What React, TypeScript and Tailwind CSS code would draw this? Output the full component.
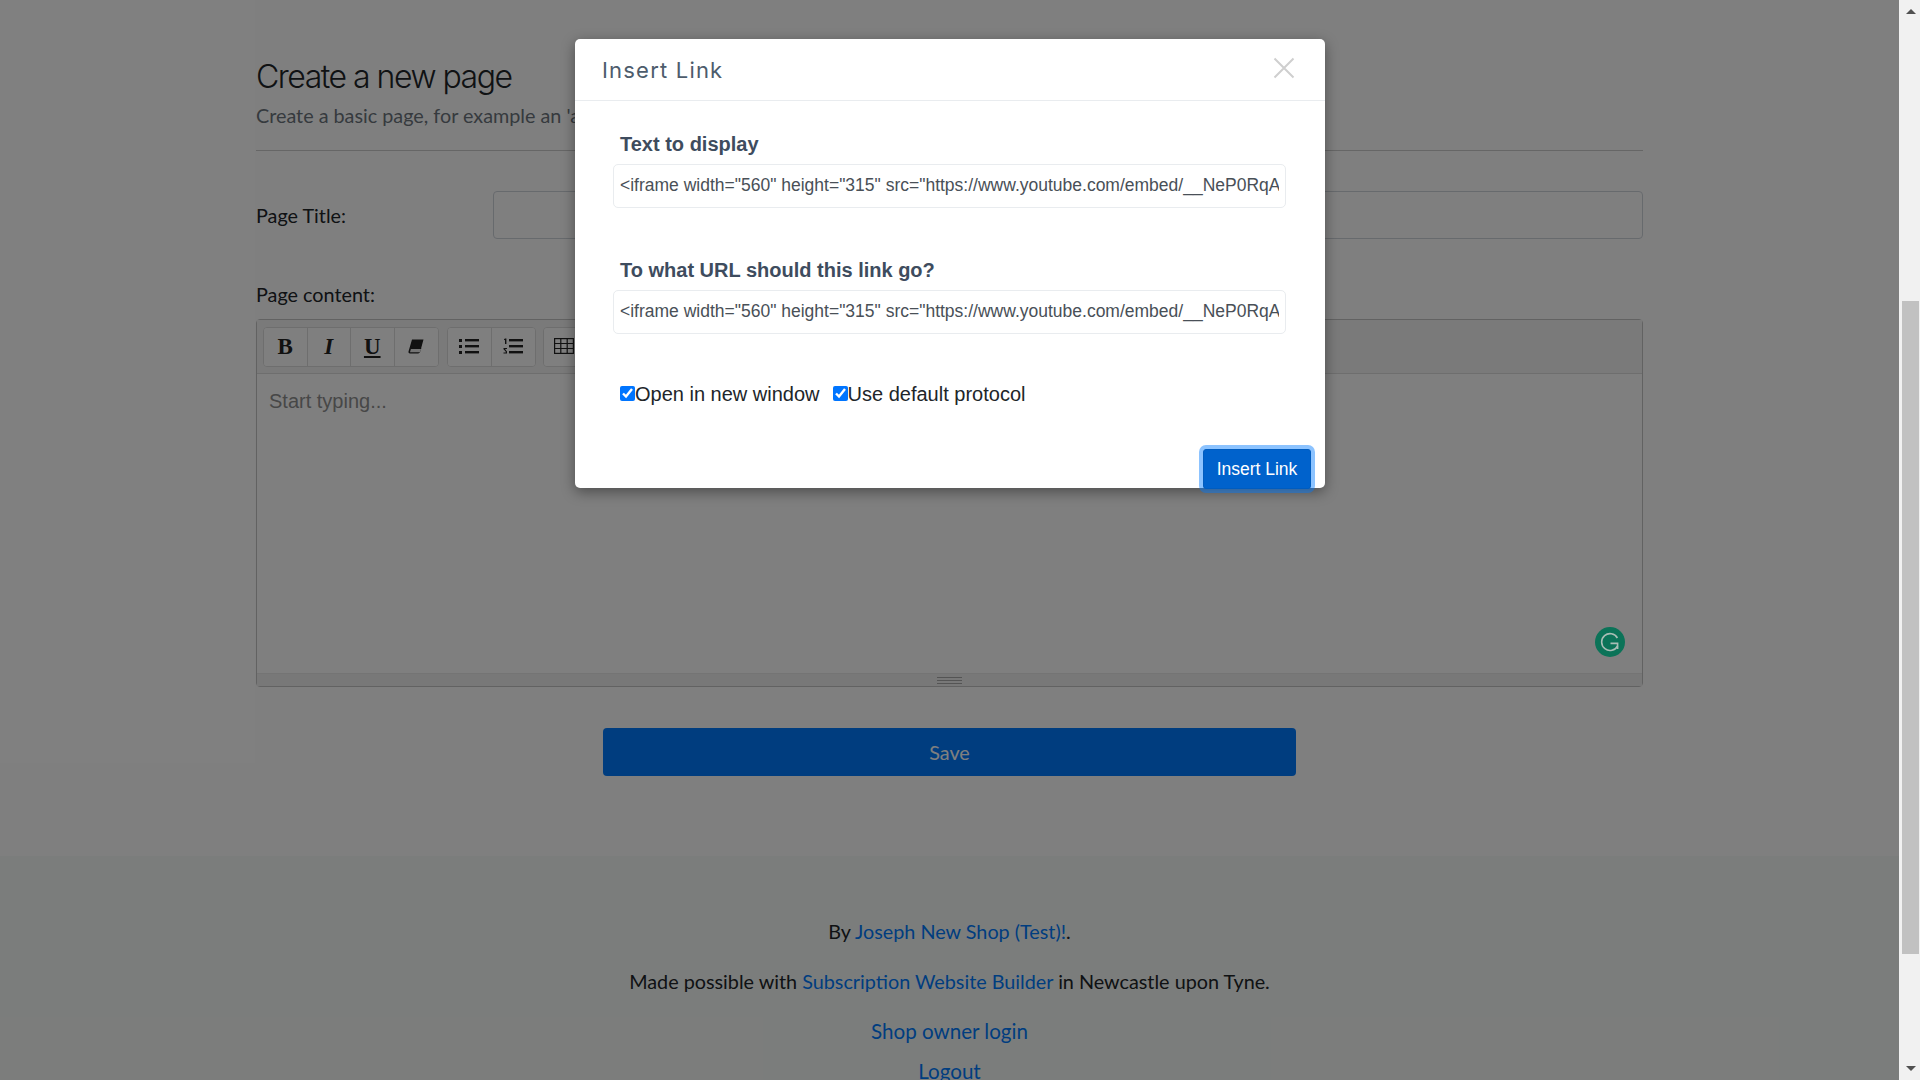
import React from "react";

const VALUE = '<iframe width="560" height="315" src="https://www.youtube.com/embed/__NeP0RqA" title="YouTube video player" frameborder="0"></iframe>';

function Tool({ children, last }: { children: React.ReactNode; last?: boolean }) {
  return (
    <div className={`flex h-[38px] w-[43.5px] items-center justify-center bg-white ${last ? "" : "border-r border-[#dddddd]"}`}>
      {children}
    </div>
  );
}

function ToolGroup({ children, tight }: { children: React.ReactNode; tight?: boolean }) {
  return <div className={`flex overflow-hidden rounded-[4px] border border-[#dddddd] bg-white ${tight ? "-ml-px" : ""}`}>{children}</div>;
}

function Toolbar() {
  const serif = "font-['Liberation_Serif',serif] text-[23px] leading-none font-bold text-[#222222]";
  return (
    <div className="flex h-[54px] items-start gap-[8px] border-b border-[#dddddd] bg-[#f5f5f5] pt-[7px] pl-[6px]">
      <ToolGroup>
        <Tool><span className={`${serif} mb-[2px]`}>B</span></Tool>
        <Tool><span className={`${serif} mb-[2px] italic`}>I</span></Tool>
        <Tool><span className={`${serif} mb-[2px] underline`}>U</span></Tool>
        <Tool last>
          <svg width="16" height="15" viewBox="0 0 16 15" className="mb-[2px]">
            <path d="M4 0.5H15.5L12.5 11.5Q12 14.5 10 14.5H2Q0 14.5 0.5 12.5Z" fill="#222222" />
            <path d="M3 9.5H13.2L12 13.2H2Z" fill="#ffffff" opacity="0.9" />
            <path d="M3 9.5H13.2" stroke="#222222" strokeWidth="1" />
          </svg>
        </Tool>
      </ToolGroup>
      <ToolGroup>
        <Tool>
          <svg width="20" height="16" viewBox="0 0 20 16" fill="#222222" className="mb-[2px]">
            <rect x="0" y="1" width="3" height="3" />
            <rect x="0" y="7" width="3" height="3" />
            <rect x="0" y="13" width="3" height="3" />
            <rect x="6" y="1" width="14" height="2.4" />
            <rect x="6" y="7" width="14" height="2.4" />
            <rect x="6" y="13" width="14" height="2.4" />
          </svg>
        </Tool>
        <Tool last>
          <svg width="20" height="16" viewBox="0 0 20 16" fill="#222222" className="mb-[2px]">
            <path d="M2 0.5H3.4V6H2V1.8L1 2.2V1.2Z" />
            <path d="M0.5 10H4V11H2L4 13.5V15.5H0.5V14.5H2.8V13.8L0.5 11.2Z" />
            <rect x="6" y="1" width="14" height="2.4" />
            <rect x="6" y="7" width="14" height="2.4" />
            <rect x="6" y="13" width="14" height="2.4" />
          </svg>
        </Tool>
      </ToolGroup>
      <ToolGroup tight>
        <Tool last>
          <svg width="20" height="16" viewBox="0 0 20 16" fill="none" stroke="#222222" strokeWidth="1.2" className="mr-[3px] mb-[2px]">
            <rect x="0.6" y="0.6" width="18.8" height="14.8" />
            <path d="M0.6 5.5H19.4M0.6 10.5H19.4M6.8 0.6V15.4M13.2 0.6V15.4" />
          </svg>
        </Tool>
      </ToolGroup>
    </div>
  );
}

function Editor() {
  return (
    <div className="relative mt-[10px] flex h-[368px] flex-col rounded-[4px] border border-[#c4c4c4] bg-white">
      <Toolbar />
      <div className="flex-1 px-[12px] pt-[12px] font-['Liberation_Sans',sans-serif] text-[20px] leading-[30px] text-[#8f8f8f]">
        Start typing...
      </div>
      <div className="flex h-[13px] flex-col items-center justify-center gap-[2px] border-t border-[#e8e8e8] bg-[#f0f0f0]">
        <div className="h-[1px] w-[25px] bg-[#a9a9a9]" />
        <div className="h-[1px] w-[25px] bg-[#a9a9a9]" />
        <div className="h-[1px] w-[25px] bg-[#a9a9a9]" />
      </div>
      <div className="absolute right-[17px] bottom-[29px] z-20 flex h-[30px] w-[30px] items-center justify-center rounded-full bg-[#0b7358]">
        <svg width="20" height="20" viewBox="0 0 20 20" fill="none" stroke="#a9bdb5" strokeWidth="1.6">
          <path d="M17.6 13.8A8.4 8.4 0 1 1 17.4 6" />
          <path d="M10.5 11.4H17.6V17" />
        </svg>
      </div>
    </div>
  );
}

function Page() {
  const lato = "font-['Lato',sans-serif]";
  return (
    <div className={`${lato} text-[19.8px] leading-[30px] text-[#212529]`}>
      <div className="ml-[256px] h-[856px] w-[1387px] overflow-hidden">
        <h1 className="mt-[55px] font-['Inter',sans-serif] text-[32px] leading-[44px] font-light tracking-[-1.5px] text-[#212529]">Create a new page</h1>
        <p className="mt-[1px] text-[#6c757d]">Create a basic page, for example an 'about us' page</p>
        <hr className="mt-[20px] border-t border-[#cccccc]" />
        <div className="mt-[40px] flex items-center">
          <label className="w-[237px]">Page Title:</label>
          <input className="h-[48px] flex-1 rounded-[4px] border border-[#ced4da] bg-white" />
        </div>
        <div className="mt-[40px]">Page content:</div>
        <Editor />
        <div className="mt-[41px] flex justify-center">
          <button className="h-[48px] w-[693px] rounded-[4px] bg-[#007bff] text-white">Save</button>
        </div>
      </div>
      <div className="h-[400px] bg-[#f7faf8] pt-[60px] text-center">
        <p>By <a className="text-[#007bff]">Joseph New Shop (Test)!</a>.</p>
        <p className="mt-[20px]">Made possible with <a className="text-[#007bff]">Subscription Website Builder</a> in Newcastle upon Tyne.</p>
        <p className="mt-[20px] text-[20.6px]"><a className="text-[#007bff]">Shop owner login</a></p>
        <p className="mt-[10px] text-[20.6px]"><a className="text-[#007bff]">Logout</a></p>
      </div>
    </div>
  );
}

function Field({ label, top }: { label: string; top: string }) {
  return (
    <div className={top}>
      <div className="pl-[7px] font-['Liberation_Sans',sans-serif] text-[20px] leading-[24px] font-bold text-[#3e4c5e]">{label}</div>
      <input
        readOnly
        value={VALUE}
        className="mt-[8px] block h-[44px] w-[673px] rounded-[5px] border border-[#e9ecef] bg-white px-[6px] pb-[2px] font-['Liberation_Sans',sans-serif] text-[17.5px] text-[#495057] outline-none"
      />
    </div>
  );
}

function Check({ label }: { label: string }) {
  return (
    <label className="flex items-center">
      <input type="checkbox" defaultChecked className="mb-[2px] h-[15px] w-[15px]" />
      <span>{label}</span>
    </label>
  );
}

function Modal() {
  return (
    <div className="absolute top-[39px] left-[575px] z-20 h-[449px] w-[750px] rounded-[5px] bg-white shadow-[0_4px_14px_rgba(0,0,0,0.4)]">
      <div className="flex h-[62px] items-center justify-between border-b border-[#e9ecef] pr-[30px] pl-[27px]">
        <span className="pt-[2px] font-['Inter',sans-serif] text-[22px] font-normal tracking-[1.2px] text-[#4d5c6c]">Insert Link</span>
        <svg width="22" height="22" viewBox="0 0 22 22" stroke="#cfcfcf" strokeWidth="2" className="mb-[4px]">
          <path d="M1.5 1.5L20.5 20.5M20.5 1.5L1.5 20.5" />
        </svg>
      </div>
      <div className="px-[38px]">
        <Field label="Text to display" top="pt-[31px]" />
        <Field label="To what URL should this link go?" top="pt-[50px]" />
        <div className="mt-[46px] flex gap-[13px] pl-[7px] font-['Liberation_Sans',sans-serif] text-[20px] leading-[28px] text-[#212529]">
          <Check label="Open in new window" />
          <Check label="Use default protocol" />
        </div>
      </div>
      <div className="mt-[41px] flex justify-end pr-[14px]">
        <button className="h-[40px] w-[108px] rounded-[3px] border border-[#005cbf] bg-[#0062cc] font-['Liberation_Sans',sans-serif] text-[17.5px] text-white shadow-[0_0_0_4px_rgba(0,123,255,0.45)]">
          Insert Link
        </button>
      </div>
    </div>
  );
}

function Scrollbar() {
  return (
    <div className="flex h-screen w-[21px] flex-col items-center bg-[#f1f1f1] pt-[9px] pl-[2px]">
      <svg width="10" height="5" viewBox="0 0 10 5"><path d="M5 0L10 5H0Z" fill="#505050" /></svg>
      <div className="mt-[287px] h-[653px] w-[17px] bg-[#c1c1c1]" />
      <svg width="10" height="5" viewBox="0 0 10 5" className="mt-[112px]"><path d="M0 0H10L5 5Z" fill="#505050" /></svg>
    </div>
  );
}

export default function App() {
  return (
    <div className="flex h-screen overflow-hidden bg-white">
      <div className="relative h-screen flex-1 overflow-hidden">
        <Page />
        <div className="absolute inset-0 z-10 bg-black/50" />
        <Modal />
      </div>
      <Scrollbar />
    </div>
  );
}
